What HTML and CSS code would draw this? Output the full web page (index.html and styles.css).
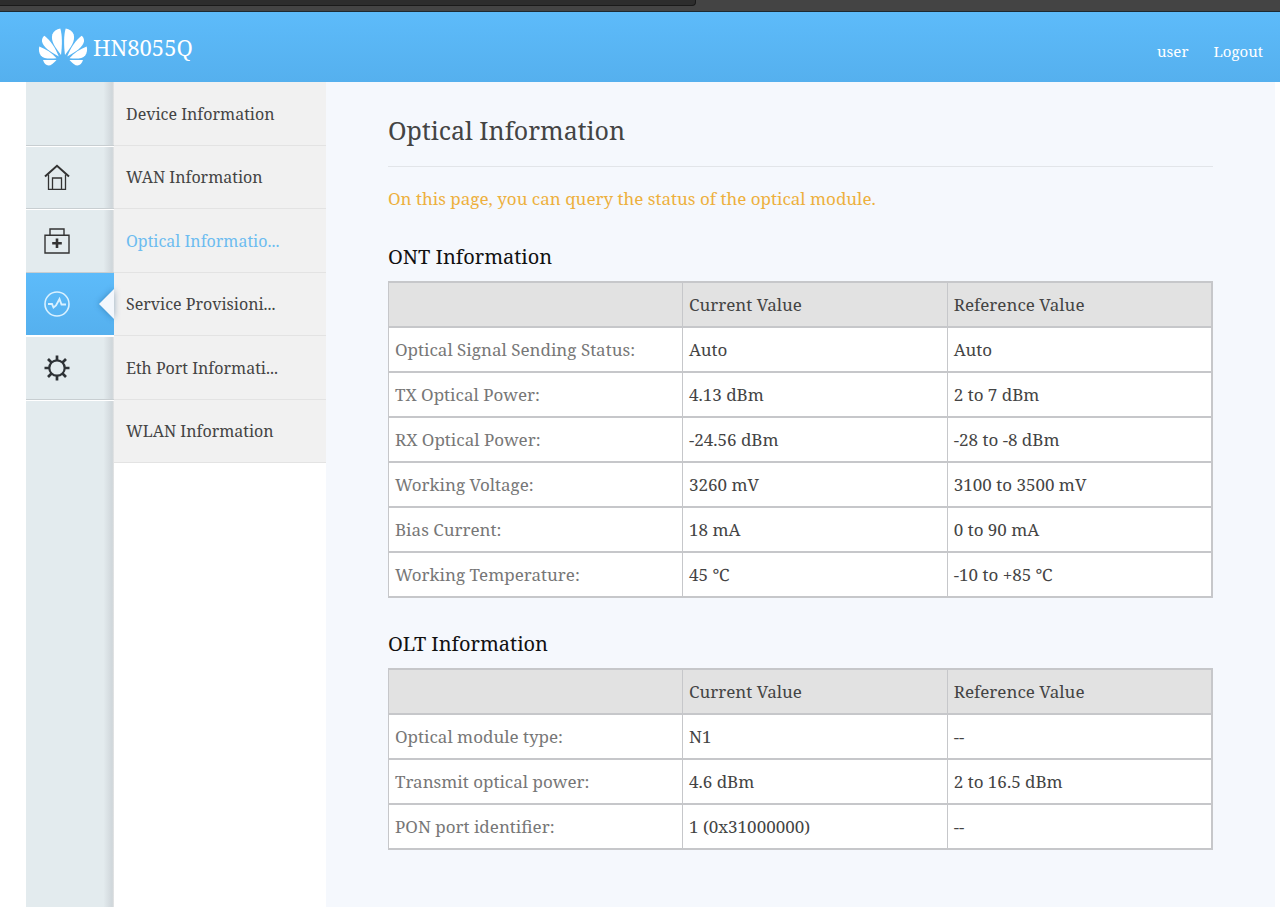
FILE: index.html
```html
<!DOCTYPE html>
<html lang="en">
<head>
    <meta charset="UTF-8">
    <meta name="viewport" content="width=device-width, initial-scale=1.0">
    <title>HN8055Q</title>
    <link rel="stylesheet" href="styles.css">
</head>
<body>
    <div class="top-strip"><div class="top-tab"></div></div>

    <header class="header">
        <div class="brand">
            <svg class="logo" viewBox="0 0 50 40" fill="#fff" aria-hidden="true">
                <g id="petals">
                    <path d="M23 28 C17 20 12.500 14 14.300 7.500 C15.500 4 18.500 2 22.300 1.500 C24.300 8 24.300 18 23 28Z"/>
                    <path d="M20.800 29.500 C12.500 25 5 20 4 14.500 C3.800 12 4.500 10 6.500 8.700 C12.500 13.500 17 20 20.800 29.500Z"/>
                    <path d="M18.500 31.200 C12 31.800 5.500 32 2.800 28.500 C1 26 0.500 22.500 1.300 19.500 C8 22 14 26 18.500 31.200Z"/>
                    <path d="M18.500 33 C15.500 36.500 13 38.500 10.500 38.500 C8 38.500 6 36 5 33Z"/>
                </g>
                <use href="#petals" transform="matrix(-1 0 0 1 50 0)"/>
            </svg>
            <span class="model">HN8055Q</span>
        </div>
        <nav class="account">
            <a href="#">user</a>
            <a href="#">Logout</a>
        </nav>
    </header>

    <div class="page">
        <!-- Main menu -->
        <nav class="main-menu">
            <div class="menu-item"></div>
            <a class="menu-item" href="#" aria-label="Home Page">
                <svg viewBox="0 0 26 26" fill="none" stroke="#333" stroke-width="1.300">
                    <path d="M1 12.500 L13 1.800 L25 12.500" stroke-width="2"/>
                    <path d="M4.500 10.500V25.300H21.500V10.500M8.500 25V14H17.500V25"/>
                </svg>
            </a>
            <a class="menu-item" href="#" aria-label="One-Click Diagnosis">
                <svg viewBox="0 0 26 26" fill="none" stroke="#333" stroke-width="1.400">
                    <path d="M1 7.200H25V25H1ZM6 7V1H20V7"/>
                    <path d="M13 10.500V20M8.200 15.200H17.800" stroke-width="2.600"/>
                </svg>
            </a>
            <a class="menu-item active" href="#" aria-label="System Information">
                <svg viewBox="0 0 26 26" fill="none" stroke="#d9f1ff" stroke-width="1.600">
                    <circle cx="13" cy="13" r="12"/>
                    <path d="M4 13H8L9.500 16.500L12 14.500L15.500 8L17.500 13.500H22" stroke-width="1.900"/>
                </svg>
            </a>
            <a class="menu-item" href="#" aria-label="Advanced Configuration">
                <svg viewBox="0 0 26 26" fill="none" stroke="#2e3236" stroke-width="2.700">
                    <circle cx="13" cy="13" r="7.700" stroke-width="2.200"/>
                    <path d="M13 0.500V5M13 21V25.500M0.500 13H5M21 13H25.500M4 4L7.500 7.500M18.500 18.500L22 22M4 22L7.500 18.500M18.500 7.500L22 4"/>
                </svg>
            </a>
        </nav>

        <!-- Sub menu -->
        <nav class="sub-menu">
            <a href="#">Device Information</a>
            <a href="#">WAN Information</a>
            <a class="current" href="#">Optical Informatio...</a>
            <a href="#">Service Provisioni...</a>
            <a href="#">Eth Port Informati...</a>
            <a href="#">WLAN Information</a>
        </nav>

        <main class="content">
            <h1>Optical Information</h1>
            <p class="summary">On this page, you can query the status of the optical module.</p>

            <h2>ONT Information</h2>
            <table>
                <thead>
                    <tr><th class="name"></th><th>Current Value</th><th>Reference Value</th></tr>
                </thead>
                <tbody>
                    <tr><td>Optical Signal Sending Status:</td><td>Auto</td><td>Auto</td></tr>
                    <tr><td>TX Optical Power:</td><td>4.13 dBm</td><td>2 to 7 dBm</td></tr>
                    <tr><td>RX Optical Power:</td><td>-24.56 dBm</td><td>-28 to -8 dBm</td></tr>
                    <tr><td>Working Voltage:</td><td>3260 mV</td><td>3100 to 3500 mV</td></tr>
                    <tr><td>Bias Current:</td><td>18 mA</td><td>0 to 90 mA</td></tr>
                    <tr><td>Working Temperature:</td><td>45 ℃</td><td>-10 to +85 ℃</td></tr>
                </tbody>
            </table>

            <h2>OLT Information</h2>
            <table>
                <thead>
                    <tr><th class="name"></th><th>Current Value</th><th>Reference Value</th></tr>
                </thead>
                <tbody>
                    <tr><td>Optical module type:</td><td>N1</td><td>--</td></tr>
                    <tr><td>Transmit optical power:</td><td>4.6 dBm</td><td>2 to 16.5 dBm</td></tr>
                    <tr><td>PON port identifier:</td><td>1 (0x31000000)</td><td>--</td></tr>
                </tbody>
            </table>
        </main>
    </div>
</body>
</html>
```
FILE: styles.css
```css
* {
    box-sizing: border-box;
}
body {
    margin: 0;
    min-height: 100vh;
    display: flex;
    flex-direction: column;
    background-color: #ffffff;
    color: #444444;
    font-family: "Noto Serif", "Droid Serif", "DejaVu Serif Condensed", "Liberation Serif", serif;
    font-size: 16px;
}
a {
    color: inherit;
    text-decoration: none;
}
.top-strip {
    height: 12px;
    background-color: #444444;
    border-bottom: 1px solid #1c2a33;
}
.top-tab {
    width: 54.4%;
    height: 6px;
    background-color: #2d2d2d;
    border: 1px solid #1a1a1a;
    border-width: 0 1px 1px 0;
    border-radius: 0 0 4px 0;
}
.header {
    display: flex;
    justify-content: space-between;
    align-items: center;
    height: 70px;
    padding: 0 17px 0 38px;
    background: linear-gradient(#5dbbfa, #55b0ee);
    color: #ffffff;
}
.brand {
    display: flex;
    align-items: center;
    gap: 5px;
}
.logo {
    width: 50px;
    height: 40px;
}
.model {
    font-size: 22px;
}
.account {
    display: flex;
    gap: 25px;
    padding-top: 8px;
    font-size: 15px;
}
.page {
    display: flex;
    flex: 1;
    padding: 0 5px 0 26px;
}
/* Main menu */
.main-menu {
    width: 88px;
    background: linear-gradient(to right, #e3ebee 88%, #cfd6da 98%, #e6e6e6);
}
.menu-item {
    display: flex;
    align-items: center;
    position: relative;
    height: 63px;
    padding-left: 18px;
    border-bottom: 1px solid #c8ced1;
    box-shadow: 0 1px 0 #ffffff;
}
.menu-item:nth-child(odd) {
    height: 64px;
}
.menu-item svg {
    width: 26px;
    height: 26px;
}
.menu-item.active {
    background: linear-gradient(#5dbbfa, #55b0ee);
    border-bottom-color: #ffffff;
}
.menu-item.active::after {
    content: "";
    position: absolute;
    right: 0;
    top: 50%;
    border: 15px solid transparent;
    border-left-width: 0;
    border-right-color: #f3f7fc;
    transform: translateY(-50%);
    filter: drop-shadow(0 0 3px rgba(0, 60, 110, 0.4));
}
/* Sub menu */
.sub-menu {
    width: 212px;
}
.sub-menu a {
    display: flex;
    align-items: center;
    height: 63px;
    padding-left: 12px;
    background-color: #f1f1f1;
    border-bottom: 1px solid #e3e3e3;
}
.sub-menu a:nth-child(odd) {
    height: 64px;
}
.sub-menu a.current {
    color: #6cbcf0;
}
/* Content */
.content {
    flex: 1;
    padding: 24px 62px;
    background-color: #f5f8fd;
}
h1 {
    margin: 0 0 16px;
    padding-bottom: 12px;
    border-bottom: 1px solid #e2e5e9;
    font-size: 25px;
    line-height: 48px;
    font-weight: normal;
}
.summary {
    margin: 0 0 26px;
    color: #edb03d;
    font-size: 17px;
    line-height: 32px;
}
h2 {
    margin: 0 0 8px;
    color: #111111;
    font-size: 20px;
    line-height: 32px;
    font-weight: normal;
}
table {
    width: 100%;
    margin-bottom: 30px;
    table-layout: fixed;
    border-collapse: collapse;
    border: 2px solid #c6c7ca;
    border-left-width: 1px;
    background-color: #ffffff;
    font-size: 17px;
}
th,
td {
    height: 45px;
    padding: 0 6px;
    border: 1px solid #c6c7ca;
    border-width: 2px 1px;
    text-align: left;
    font-weight: normal;
}
th {
    background-color: #e2e2e2;
}
.name {
    width: 35.7%;
}
td:first-child {
    color: #777777;
}
```
